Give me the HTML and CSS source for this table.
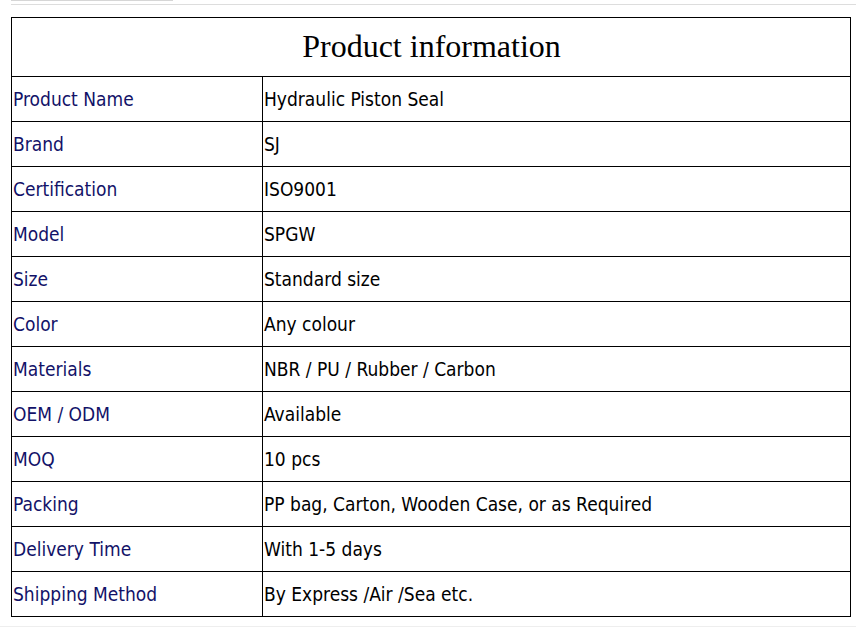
FILE: index.html
```html
<!DOCTYPE html>
<html lang="en">
<head>
<meta charset="utf-8">
<title>Product information</title>
<link rel="stylesheet" href="styles.css">
</head>
<body>
<div class="tabbar"><div class="tab"></div></div>
<div class="wrap">
<table class="info">
  <tr><th class="title" colspan="2">Product information</th></tr>
  <tr><td class="k">Product Name</td><td class="v">Hydraulic Piston Seal</td></tr>
  <tr><td class="k">Brand</td><td class="v">SJ</td></tr>
  <tr><td class="k">Certification</td><td class="v">ISO9001</td></tr>
  <tr><td class="k">Model</td><td class="v">SPGW</td></tr>
  <tr><td class="k">Size</td><td class="v">Standard size</td></tr>
  <tr><td class="k">Color</td><td class="v">Any colour</td></tr>
  <tr><td class="k">Materials</td><td class="v">NBR / PU / Rubber / Carbon</td></tr>
  <tr><td class="k">OEM / ODM</td><td class="v">Available</td></tr>
  <tr><td class="k">MOQ</td><td class="v">10 pcs</td></tr>
  <tr><td class="k">Packing</td><td class="v">PP bag, Carton, Wooden Case, or as Required</td></tr>
  <tr><td class="k">Delivery Time</td><td class="v">With 1-5 days</td></tr>
  <tr><td class="k">Shipping Method</td><td class="v">By Express /Air /Sea etc.</td></tr>
</table>
</div>
<div class="footline"></div>
</body>
</html>
```
FILE: styles.css
```css
html, body {
  margin: 0;
  padding: 0;
  background: #ffffff;
}
.tabbar {
  margin-left: 11px;
  height: 4px;
  border-bottom: 1px solid #dddddd;
}
.tab {
  width: 162px;
  height: 1px;
  background: #d6d6d6;
}
.wrap {
  padding: 12px 5px 0 11px;
}
.info {
  width: 840px;
  border-collapse: collapse;
  font-family: "DejaVu Sans Condensed", "DejaVu Sans", sans-serif;
  font-size: 19px;
}
.info th, .info td {
  border: 1px solid #000000;
  padding: 0 0 0 1px;
  text-align: left;
  vertical-align: middle;
}
.info .title {
  height: 56px;
  text-align: center;
  font-family: "Liberation Serif", serif;
  font-weight: normal;
  font-size: 32px;
  color: #000000;
  padding-bottom: 2px;
}
.info td {
  height: 44px;
}
.info .k {
  width: 249px;
  color: #121268;
}
.info .v {
  color: #000000;
}
.footline {
  margin-top: 9px;
  height: 1px;
  background: #eeeeee;
}
```
